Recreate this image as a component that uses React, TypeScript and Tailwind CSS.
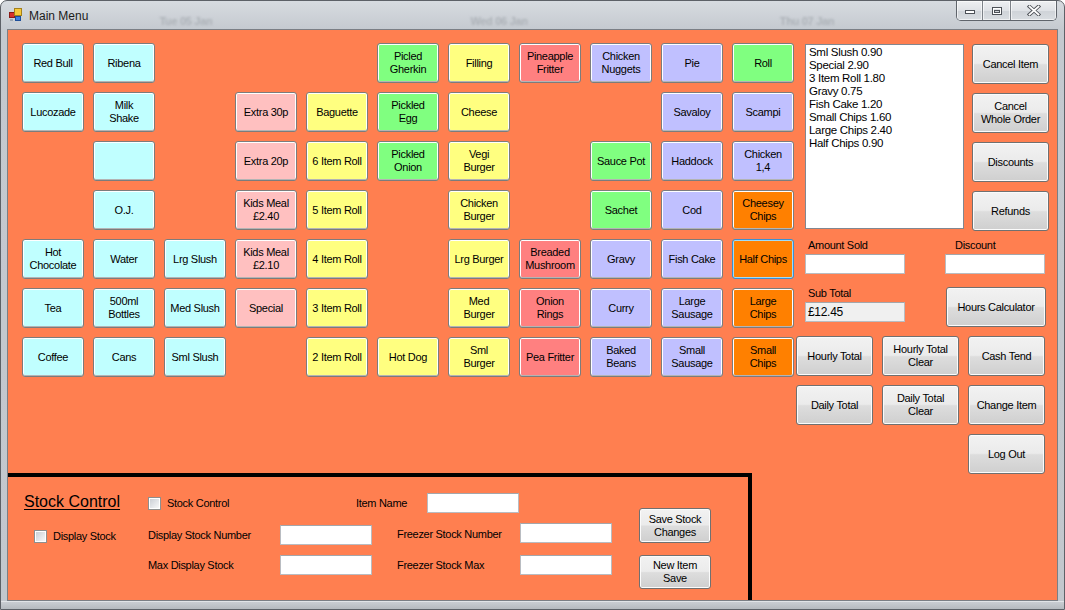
import React from "react";

type Cell = { c: number; r: number; t: string[]; k: string; focus?: boolean };

const COLS = [
  "col-start-1", "col-start-2", "col-start-3", "col-start-4", "col-start-5", "col-start-6",
  "col-start-7", "col-start-8", "col-start-9", "col-start-10", "col-start-11",
];
const ROWS = ["row-start-1", "row-start-2", "row-start-3", "row-start-4", "row-start-5", "row-start-6", "row-start-7"];

const BG: Record<string, string> = {
  c: "bg-[#c0ffff]",
  p: "bg-[#ffc0c0]",
  y: "bg-[#ffff80]",
  g: "bg-[#80ff80]",
  r: "bg-[#ff8080]",
  l: "bg-[#c0c0ff]",
  o: "bg-[#ff8000]",
};

const cells: Cell[] = [
  { c: 0, r: 0, t: ["Red Bull"], k: "c" },
  { c: 1, r: 0, t: ["Ribena"], k: "c" },
  { c: 5, r: 0, t: ["Picled", "Gherkin"], k: "g" },
  { c: 6, r: 0, t: ["Filling"], k: "y" },
  { c: 7, r: 0, t: ["Pineapple", "Fritter"], k: "r" },
  { c: 8, r: 0, t: ["Chicken", "Nuggets"], k: "l" },
  { c: 9, r: 0, t: ["Pie"], k: "l" },
  { c: 10, r: 0, t: ["Roll"], k: "g" },

  { c: 0, r: 1, t: ["Lucozade"], k: "c" },
  { c: 1, r: 1, t: ["Milk", "Shake"], k: "c" },
  { c: 3, r: 1, t: ["Extra 30p"], k: "p" },
  { c: 4, r: 1, t: ["Baguette"], k: "y" },
  { c: 5, r: 1, t: ["Pickled", "Egg"], k: "g" },
  { c: 6, r: 1, t: ["Cheese"], k: "y" },
  { c: 9, r: 1, t: ["Savaloy"], k: "l" },
  { c: 10, r: 1, t: ["Scampi"], k: "l" },

  { c: 1, r: 2, t: [""], k: "c" },
  { c: 3, r: 2, t: ["Extra 20p"], k: "p" },
  { c: 4, r: 2, t: ["6 Item Roll"], k: "y" },
  { c: 5, r: 2, t: ["Pickled", "Onion"], k: "g" },
  { c: 6, r: 2, t: ["Vegi", "Burger"], k: "y" },
  { c: 8, r: 2, t: ["Sauce Pot"], k: "g" },
  { c: 9, r: 2, t: ["Haddock"], k: "l" },
  { c: 10, r: 2, t: ["Chicken", "1,4"], k: "l" },

  { c: 1, r: 3, t: ["O.J."], k: "c" },
  { c: 3, r: 3, t: ["Kids Meal", "£2.40"], k: "p" },
  { c: 4, r: 3, t: ["5 Item Roll"], k: "y" },
  { c: 6, r: 3, t: ["Chicken", "Burger"], k: "y" },
  { c: 8, r: 3, t: ["Sachet"], k: "g" },
  { c: 9, r: 3, t: ["Cod"], k: "l" },
  { c: 10, r: 3, t: ["Cheesey", "Chips"], k: "o" },

  { c: 0, r: 4, t: ["Hot", "Chocolate"], k: "c" },
  { c: 1, r: 4, t: ["Water"], k: "c" },
  { c: 2, r: 4, t: ["Lrg Slush"], k: "c" },
  { c: 3, r: 4, t: ["Kids Meal", "£2.10"], k: "p" },
  { c: 4, r: 4, t: ["4 Item Roll"], k: "y" },
  { c: 6, r: 4, t: ["Lrg Burger"], k: "y" },
  { c: 7, r: 4, t: ["Breaded", "Mushroom"], k: "r" },
  { c: 8, r: 4, t: ["Gravy"], k: "l" },
  { c: 9, r: 4, t: ["Fish Cake"], k: "l" },
  { c: 10, r: 4, t: ["Half Chips"], k: "o", focus: true },

  { c: 0, r: 5, t: ["Tea"], k: "c" },
  { c: 1, r: 5, t: ["500ml", "Bottles"], k: "c" },
  { c: 2, r: 5, t: ["Med Slush"], k: "c" },
  { c: 3, r: 5, t: ["Special"], k: "p" },
  { c: 4, r: 5, t: ["3 Item Roll"], k: "y" },
  { c: 6, r: 5, t: ["Med", "Burger"], k: "y" },
  { c: 7, r: 5, t: ["Onion", "Rings"], k: "r" },
  { c: 8, r: 5, t: ["Curry"], k: "l" },
  { c: 9, r: 5, t: ["Large", "Sausage"], k: "l" },
  { c: 10, r: 5, t: ["Large", "Chips"], k: "o" },

  { c: 0, r: 6, t: ["Coffee"], k: "c" },
  { c: 1, r: 6, t: ["Cans"], k: "c" },
  { c: 2, r: 6, t: ["Sml Slush"], k: "c" },
  { c: 4, r: 6, t: ["2 Item Roll"], k: "y" },
  { c: 5, r: 6, t: ["Hot Dog"], k: "y" },
  { c: 6, r: 6, t: ["Sml", "Burger"], k: "y" },
  { c: 7, r: 6, t: ["Pea Fritter"], k: "r" },
  { c: 8, r: 6, t: ["Baked", "Beans"], k: "l" },
  { c: 9, r: 6, t: ["Small", "Sausage"], k: "l" },
  { c: 10, r: 6, t: ["Small", "Chips"], k: "o" },
];

const orderItems = [
  "Sml Slush 0.90",
  "Special 2.90",
  "3 Item Roll 1.80",
  "Gravy 0.75",
  "Fish Cake 1.20",
  "Small Chips 1.60",
  "Large Chips 2.40",
  "Half Chips 0.90",
];

function Lines({ t }: { t: string[] }) {
  return (
    <span className="flex flex-col items-center leading-[13px] whitespace-nowrap">
      {t.map((s, i) => (
        <span key={i}>{s}</span>
      ))}
    </span>
  );
}

function GrayBtn({ t, className }: { t: string[]; className: string }) {
  return (
    <div
      className={
        "flex items-center justify-center text-center rounded-[3px] border border-[#707070] shadow-[inset_0_0_0_1px_#fbfbfb] bg-[linear-gradient(to_bottom,#f2f2f2_0%,#ebebeb_48%,#dddddd_52%,#cfcfcf_100%)] " +
        className
      }
    >
      <Lines t={t} />
    </div>
  );
}

function TextBox({ className, value }: { className: string; value?: string }) {
  return (
    <div
      className={
        "h-[20px] border border-[#b9bcc1] border-t-[#a3a6ab] flex items-center pl-[2px] text-[12px] " + className
      }
    >
      {value}
    </div>
  );
}

function CheckBox() {
  return (
    <div className="w-[13px] h-[13px] border border-[#8e8f8f] bg-white p-[1px] shrink-0">
      <div className="w-full h-full bg-[linear-gradient(135deg,#cbcfd5_0%,#e6e8eb_60%,#f7f7f7_100%)]" />
    </div>
  );
}

function AppIcon() {
  return (
    <svg width="14" height="14" viewBox="0 0 14 14">
      <rect x="0.5" y="4.5" width="5" height="5" fill="#d9312b" stroke="#8a1a16" strokeWidth="1" />
      <rect x="5.5" y="0.5" width="7" height="7" fill="#f6c93a" stroke="#a4801a" strokeWidth="1" />
      <rect x="6.5" y="8.5" width="5" height="4" fill="#3d7fe0" stroke="#1e4f9a" strokeWidth="1" />
      <rect x="1" y="11" width="3" height="2" fill="#9aa6b3" />
    </svg>
  );
}

function CaptionButtons() {
  const base =
    "h-[19px] flex items-center justify-center bg-[linear-gradient(to_bottom,#eef0f2_0%,#dfe2e6_50%,#cfd3d8_51%,#d9dde1_100%)] shadow-[inset_0_0_0_1px_rgba(255,255,255,0.6)]";
  return (
    <div className="flex self-start border border-t-0 border-[#5f646b] rounded-b-[5px] overflow-hidden mr-[7px]">
      <div className={base + " w-[26px] border-r border-[#7d8288]"}>
        <svg width="12" height="8" viewBox="0 0 12 8">
          <rect x="1.5" y="3.5" width="9" height="3" fill="#fff" stroke="#4d5157" strokeWidth="1" />
        </svg>
      </div>
      <div className={base + " w-[28px] border-r border-[#7d8288]"}>
        <svg width="12" height="10" viewBox="0 0 12 10">
          <rect x="1.5" y="1.5" width="9" height="7" fill="none" stroke="#4d5157" strokeWidth="1" />
          <rect x="2.5" y="2.5" width="7" height="5" fill="none" stroke="#fff" strokeWidth="1" />
          <rect x="3.5" y="4.5" width="5" height="2" fill="#cfd3d8" stroke="#4d5157" strokeWidth="1" />
        </svg>
      </div>
      <div className={base + " w-[45px]"}>
        <svg width="14" height="11" viewBox="0 0 14 11">
          <path d="M2.5 1.5 L11.5 9.5 M11.5 1.5 L2.5 9.5" stroke="#4d5157" strokeWidth="3.6" strokeLinecap="square" />
          <path d="M2.5 1.5 L11.5 9.5 M11.5 1.5 L2.5 9.5" stroke="#ffffff" strokeWidth="1.8" strokeLinecap="square" />
        </svg>
      </div>
    </div>
  );
}

export default function App() {
  return (
    <div className="w-[1065px] h-[610px] bg-white font-['Liberation_Sans',Arial,sans-serif] text-[11px] tracking-[-0.3px] text-black">
      <div className="w-[1065px] h-[610px] border border-[#5d6167] rounded-t-[7px] bg-[linear-gradient(to_bottom,#d7dbe0_0px,#c4c9cf_30px,#c2c7cd_100%)] flex flex-col overflow-hidden">
        {/* Title bar */}
        <div className="h-[28px] flex items-start overflow-hidden shrink-0">
          <div className="ml-[8px] mt-[7px]">
            <AppIcon />
          </div>
          <span className="ml-[6px] mt-[6px] text-[12px] tracking-normal text-[#1b1b1b]">Main Menu</span>
          <span className="ml-[71px] mt-[14px] text-[11px] leading-[13px] font-bold text-[#adb2b8] blur-[0.8px] whitespace-nowrap">
            Tue 05 Jan
          </span>
          <span className="ml-[258px] mt-[14px] text-[11px] leading-[13px] font-bold text-[#adb2b8] blur-[0.8px] whitespace-nowrap">
            Wed 06 Jan
          </span>
          <span className="ml-[252px] mt-[14px] text-[11px] leading-[13px] font-bold text-[#adb2b8] blur-[0.8px] whitespace-nowrap">
            Thu 07 Jan
          </span>
          <div className="ml-auto">
            <CaptionButtons />
          </div>
        </div>

        {/* Client area */}
        <div className="flex px-[6px] shrink-0">
          <div className="w-[1051px] h-[572px] border border-[#7b7f85] bg-[#ff7f50] flex flex-col">
            {/* Top section */}
            <div className="h-[443px] shrink-0 pt-[13px] pl-[14px] flex items-start">
              <div className="grid grid-cols-[repeat(11,62px)] grid-rows-[repeat(7,40px)] gap-[9px]">
                {cells.map((b, i) => (
                  <div
                    key={i}
                    className={
                      COLS[b.c] +
                      " " +
                      ROWS[b.r] +
                      " " +
                      BG[b.k] +
                      " flex items-center justify-center text-center rounded-[3px] border " +
                      (b.focus
                        ? "border-[#3c8fcf] shadow-[inset_0_0_0_1px_#9fdcf8]"
                        : "border-[#7c7c7c] shadow-[inset_0_-1px_0_#b4b4b4,inset_0_0_0_1px_#ffffff]")
                    }
                  >
                    <Lines t={b.t} />
                  </div>
                ))}
              </div>

              {/* Right panel */}
              <div className="ml-[2px] w-[253px] flex flex-col">
                <div className="flex mt-[1px]">
                  <div className="ml-[9px] w-[159px] h-[185px] bg-white border border-[#828790] pl-[3px] pt-[1px] leading-[13px] text-[11.5px]">
                    {orderItems.map((s) => (
                      <div key={s} className="whitespace-nowrap">
                        {s}
                      </div>
                    ))}
                  </div>
                  <div className="ml-[8px] w-[77px] flex flex-col gap-[9px]">
                    <GrayBtn t={["Cancel Item"]} className="h-[40px]" />
                    <GrayBtn t={["Cancel", "Whole Order"]} className="h-[40px]" />
                    <GrayBtn t={["Discounts"]} className="h-[40px]" />
                    <GrayBtn t={["Refunds"]} className="h-[40px]" />
                  </div>
                </div>

                <div className="flex mt-[8px]">
                  <div className="ml-[9px] w-[100px] flex flex-col">
                    <span className="pl-[3px] leading-[13px]">Amount Sold</span>
                    <TextBox className="mt-[2px] w-[100px] bg-white" />
                  </div>
                  <div className="ml-[40px] w-[100px] flex flex-col">
                    <span className="pl-[10px] leading-[13px]">Discount</span>
                    <TextBox className="mt-[2px] w-[100px] bg-white" />
                  </div>
                </div>

                <div className="flex mt-[13px]">
                  <div className="ml-[9px] w-[100px] flex flex-col">
                    <span className="pl-[3px] leading-[13px]">Sub Total</span>
                    <TextBox className="mt-[2px] w-[100px] bg-[#f0f0f0]" value="£12.45" />
                  </div>
                  <GrayBtn t={["Hours Calculator"]} className="ml-[41px] w-[100px] h-[40px]" />
                </div>

                <div className="flex gap-[9px] mt-[9px]">
                  <GrayBtn t={["Hourly Total"]} className="w-[77px] h-[40px]" />
                  <GrayBtn t={["Hourly Total", "Clear"]} className="w-[77px] h-[40px]" />
                  <GrayBtn t={["Cash Tend"]} className="w-[77px] h-[40px]" />
                </div>
                <div className="flex gap-[9px] mt-[9px]">
                  <GrayBtn t={["Daily Total"]} className="w-[77px] h-[40px]" />
                  <GrayBtn t={["Daily Total", "Clear"]} className="w-[77px] h-[40px]" />
                  <GrayBtn t={["Change Item"]} className="w-[77px] h-[40px]" />
                </div>
                <div className="flex mt-[9px]">
                  <GrayBtn t={["Log Out"]} className="ml-[172px] w-[77px] h-[40px]" />
                </div>
              </div>
            </div>

            {/* Stock control panel */}
            <div className="w-[744px] h-[127px] border-t-4 border-r-4 border-black flex">
              <div className="w-[631px] flex flex-col pt-[16px]">
                <div className="h-[20px] flex items-center">
                  <div className="w-[140px] pl-[16px]">
                    <span className="text-[16px] tracking-normal underline underline-offset-[2px] leading-none">
                      Stock Control
                    </span>
                  </div>
                  <div className="w-[208px] flex items-center">
                    <CheckBox />
                    <span className="ml-[6px]">Stock Control</span>
                  </div>
                  <span className="w-[71px]">Item Name</span>
                  <TextBox className="w-[92px] bg-white" />
                </div>

                <div className="h-[22px] mt-[10px] flex items-center">
                  <div className="w-[140px] pl-[26px] flex items-center pt-[4px]">
                    <CheckBox />
                    <span className="ml-[6px]">Display Stock</span>
                  </div>
                  <span className="w-[132px] pt-[3px]">Display Stock Number</span>
                  <TextBox className="w-[92px] bg-white self-end" />
                  <span className="ml-[25px] w-[123px]">Freezer Stock Number</span>
                  <TextBox className="w-[92px] bg-white self-start" />
                </div>

                <div className="h-[20px] mt-[10px] flex items-center">
                  <span className="ml-[140px] w-[132px]">Max Display Stock</span>
                  <TextBox className="w-[92px] bg-white" />
                  <span className="ml-[25px] w-[123px]">Freezer Stock Max</span>
                  <TextBox className="w-[92px] bg-white" />
                </div>
              </div>

              <div className="flex flex-col pt-[31px]">
                <GrayBtn t={["Save Stock", "Changes"]} className="w-[72px] h-[35px]" />
                <GrayBtn t={["New Item", "Save"]} className="mt-[12px] w-[72px] h-[34px]" />
              </div>
            </div>
          </div>
        </div>

        {/* Bottom frame */}
        <div className="flex-1 border-t border-[#e1e4e7] bg-[linear-gradient(to_bottom,#c9cdd2,#b5babf)]" />
      </div>
    </div>
  );
}
